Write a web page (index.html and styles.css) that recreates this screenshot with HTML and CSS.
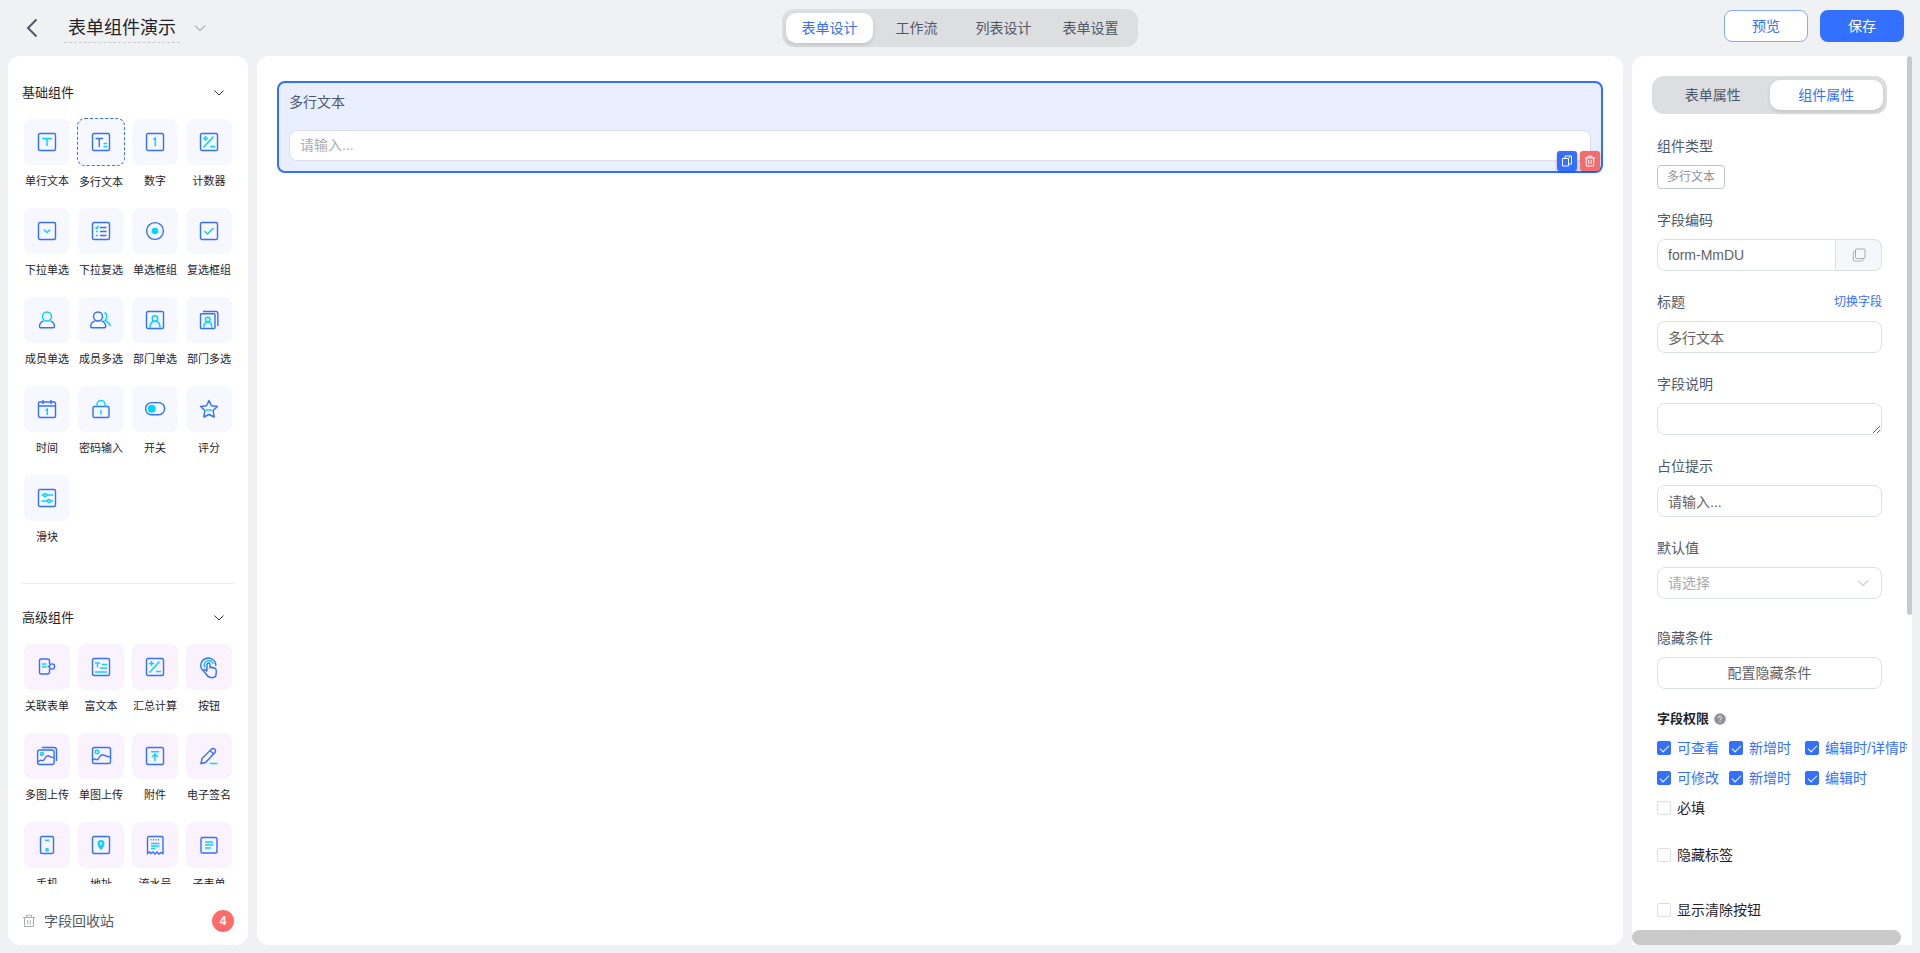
FILE: index.html
```html
<!DOCTYPE html>
<html lang="zh-CN">
<head>
    <meta charset="UTF-8">
    <meta name="viewport" content="width=device-width, initial-scale=1.0">
    <title>表单组件演示</title>
    <link rel="stylesheet" href="styles.css">
</head>
<body>
    <header class="header">
        <div class="header-left">
            <button class="icon-btn back" aria-label="返回">
                <svg width="12" height="20" viewBox="0 0 12 20"><path d="M10.500 1.500L2 10l8.500 8.500" /></svg>
            </button>
            <h1 class="form-name">表单组件演示</h1>
            <button class="icon-btn" aria-label="更多">
                <svg class="chevron" width="12" height="8" viewBox="0 0 12 8"><path d="M1 1.500l5 5 5-5" /></svg>
            </button>
        </div>
        <nav class="tabs">
            <button class="tab active">表单设计</button>
            <button class="tab">工作流</button>
            <button class="tab">列表设计</button>
            <button class="tab">表单设置</button>
        </nav>
        <div class="header-right">
            <button class="btn btn-plain">预览</button>
            <button class="btn btn-primary">保存</button>
        </div>
    </header>

    <main class="main">
        <aside class="panel sidebar">
            <div class="sidebar-list">
                <section class="group">
                    <h2 class="group-title">基础组件
                        <svg class="chevron dark" width="12" height="8" viewBox="0 0 12 8"><path d="M1.500 1.500L6 6l4.500-4.500" /></svg>
                    </h2>
                    <div class="widgets" id="basicList"></div>
                </section>
                <section class="group advanced">
                    <h2 class="group-title">高级组件
                        <svg class="chevron dark" width="12" height="8" viewBox="0 0 12 8"><path d="M1.500 1.500L6 6l4.500-4.500" /></svg>
                    </h2>
                    <div class="widgets" id="advancedList"></div>
                </section>
            </div>
            <div class="recycle">
                <svg width="14" height="14" viewBox="0 0 14 14"><path d="M1 3.500h12M4.500 3V1.300h5V3M2.500 3.500v9h9v-9M5.700 6v4.500M8.300 6v4.500" /></svg>
                <span>字段回收站</span>
                <span class="badge">4</span>
            </div>
        </aside>

        <section class="panel canvas">
            <div class="field selected">
                <label class="field-label" for="previewText">多行文本</label>
                <textarea class="field-text" id="previewText" rows="1" placeholder="请输入..."></textarea>
                <div class="field-tools">
                    <button class="tool" aria-label="复制">
                        <svg width="12" height="12" viewBox="0 0 12 12"><path d="M1.500 3.500h6v7.500h-6zM4 3.500V1h6.500v8H7.500M7.500 3.500l2-2" /></svg>
                    </button>
                    <button class="tool danger" aria-label="删除">
                        <svg width="12" height="12" viewBox="0 0 12 12"><path d="M1 3h10M4 3V1.200h4V3M2.300 3v8h7.400V3M4.800 5v4M7.200 5v4" /></svg>
                    </button>
                </div>
            </div>
        </section>

        <aside class="panel props">
            <div class="props-body">
                <div class="props-content">
                    <nav class="tabs props-tabs">
                        <button class="tab">表单属性</button>
                        <button class="tab active">组件属性</button>
                    </nav>
                    <div class="form">
                        <div class="form-item">
                            <div class="form-label">组件类型</div>
                            <span class="tag">多行文本</span>
                        </div>
                        <div class="form-item">
                            <label class="form-label" for="code">字段编码</label>
                            <div class="input-group">
                                <input class="input" id="code" type="text" value="form-MmDU">
                                <button class="append" aria-label="复制编码">
                                    <svg width="14" height="14" viewBox="0 0 14 14"><rect x="3.500" y="1" width="9.500" height="9.500" rx="1" /><path d="M3.500 3.500H2.300a1 1 0 0 0-1 1v7.500a1 1 0 0 0 1 1h7.500a1 1 0 0 0 1-1v-1.500" /></svg>
                                </button>
                            </div>
                        </div>
                        <div class="form-item">
                            <div class="form-label">
                                <label for="title">标题</label>
                                <a class="link" href="#">切换字段</a>
                            </div>
                            <input class="input" id="title" type="text" value="多行文本">
                        </div>
                        <div class="form-item">
                            <label class="form-label" for="desc">字段说明</label>
                            <textarea class="input" id="desc" rows="1"></textarea>
                        </div>
                        <div class="form-item">
                            <label class="form-label" for="placeholder">占位提示</label>
                            <input class="input" id="placeholder" type="text" value="请输入...">
                        </div>
                        <div class="form-item spaced">
                            <label class="form-label" for="defaultValue">默认值</label>
                            <div class="select-wrap">
                                <select class="input" id="defaultValue">
                                    <option>请选择</option>
                                </select>
                                <svg class="chevron" width="12" height="8" viewBox="0 0 12 8"><path d="M1 1.500l5 5 5-5" /></svg>
                            </div>
                        </div>
                        <div class="form-item">
                            <div class="form-label">隐藏条件</div>
                            <button class="input config-btn">配置隐藏条件</button>
                        </div>
                        <div class="perm-title">字段权限
                            <svg width="12" height="12" viewBox="0 0 12 12"><circle cx="6" cy="6" r="5.800" fill="#909399" /><path d="M4.400 4.800a1.600 1.600 0 1 1 2.400 1.400c-.600.300-.800.500-.800 1M6 8.300v1" fill="none" stroke="#fff" /></svg>
                        </div>
                        <div class="perms">
                            <label class="check"><input type="checkbox" checked>可查看</label>
                            <label class="check"><input type="checkbox" checked>新增时</label>
                            <label class="check"><input type="checkbox" checked>编辑时/详情时</label>
                            <label class="check"><input type="checkbox" checked>可修改</label>
                            <label class="check"><input type="checkbox" checked>新增时</label>
                            <label class="check"><input type="checkbox" checked>编辑时</label>
                        </div>
                        <div class="options">
                            <label class="check"><input type="checkbox">必填</label>
                            <label class="check"><input type="checkbox">隐藏标签</label>
                            <label class="check last"><input type="checkbox">显示清除按钮</label>
                        </div>
                    </div>
                </div>
                <div class="scroll-y"><div class="scroll-thumb"></div></div>
            </div>
            <div class="scroll-x"><div class="scroll-thumb"></div></div>
        </aside>
    </main>

    <script>
        // .c = cyan stroke, .cf = cyan fill
        const box = '<rect x="1.500" y="1.500" width="17" height="17" rx="1.500" />';

        const basic = [
            { name: '单行文本', icon: box + '<path class="c" d="M5 6.500h10M10 6.500v7.500" />' },
            { name: '多行文本', selected: true, icon: box + '<path d="M4.500 6.500h7.500M8.200 6.500v8.500" /><path class="c" d="M12.500 11.500h3.500M12.500 14.500h3.500" />' },
            { name: '数字', icon: box + '<path class="c" d="M8.300 7.500l2-1.300v8" />' },
            { name: '计数器', icon: box + '<path class="c" d="M4.500 15.500l10-11M4 6.500h5M6.500 4v5M11 14.500h5" />' },
            { name: '下拉单选', icon: box + '<path class="c" d="M7 8.500l3 3 3-3" />' },
            { name: '下拉复选', icon: box + '<path class="c" d="M4.500 6.200l1.200 1.300 2-2.500M5 10.500h2M5 14.500h2" /><path d="M9 6.500h6.500M9 10.500h6.500M9 14.500h6.500" />' },
            { name: '单选框组', icon: '<circle cx="10" cy="10" r="8.400" /><circle class="cf" cx="10" cy="10" r="3.300" />' },
            { name: '复选框组', icon: box + '<path class="c" d="M5.500 10l3 3 6-6" />' },
            { name: '成员单选', icon: '<path d="M6.500 10.800C4 12 2.500 14 2.500 16.200c0 1.200.800 1.600 2 1.600h11c1.200 0 2-.400 2-1.600 0-2.200-1.500-4.200-4-5.400" /><circle class="c" cx="10" cy="6.500" r="4.500" />' },
            { name: '成员多选', icon: '<circle cx="7" cy="6.500" r="4.500" /><path d="M3.800 10.800C1.300 12-.300 14-.300 16.200c0 1.200.800 1.600 2 1.600h11c1.200 0 2-.400 2-1.600 0-2.200-1.600-4.200-4-5.400" /><path class="c" d="M13.500 2.500c3 1.700 3 6 .500 8 3.500 1.200 4 3 5.500 5.500" />' },
            { name: '部门单选', icon: box + '<circle class="c" cx="10" cy="8.500" r="2.800" /><path class="c" d="M5 17.800c0-4 2-6.500 5-6.500s5 2.500 5 6.500" />' },
            { name: '部门多选', icon: '<rect x="1.500" y="3.800" width="14.500" height="14.700" rx="1" /><path d="M4 1.500h13a1.800 1.800 0 0 1 1.800 1.800V16" /><circle class="c" cx="8.800" cy="9.500" r="2.300" /><path class="c" d="M4.800 17.500c0-3.500 1.500-5.500 4-5.500s4 2 4 5.500" />' },
            { name: '时间', icon: '<rect x="1.500" y="3" width="17" height="15.500" rx="1.500" /><path d="M1.500 7h17M6 1v4M14 1v4" /><path class="c" d="M8.500 11.300l1.800-1.200v6" />' },
            { name: '密码输入', icon: '<rect x="2" y="7.500" width="16" height="11" rx="1.500" /><path class="c" d="M6 7.500V5.500a4 4 0 0 1 8 0v2M10 11v4.500" />' },
            { name: '开关', icon: '<rect x=".600" y="3.600" width="19" height="12.200" rx="6" /><circle class="cf" cx="6.700" cy="9.700" r="4" />' },
            { name: '评分', icon: '<path stroke-linejoin="round" d="M10 1.500l2.500 5.300 5.900.700-4.300 4 1.100 6.500-5.200-2.500L4.800 18l1.100-6.500-4.300-4 5.900-.700z" /><path class="c" d="M7 11h6" />' },
            { name: '滑块', icon: box + '<circle class="c" cx="8" cy="7" r="1.500" /><circle class="c" cx="12" cy="13" r="1.500" /><path class="c" d="M4.500 7h2M9.500 7h6.500M4.500 13h6M13.500 13H16" />' }
        ];

        const advanced = [
            { name: '关联表单', icon: '<path d="M12.500 7V4a2 2 0 0 0-2-2H4a1.500 1.500 0 0 0-1.500 1.500v12A1.500 1.500 0 0 0 4 17h6.500a2 2 0 0 0 2-2v-3M10.500 9.500h2" /><circle cx="15" cy="9.500" r="2.600" /><path class="c" d="M5 7h4.500M5 10h4.500" />' },
            { name: '富文本', icon: box + '<path class="c" d="M4 6h5M6.500 6v4.500M11 7.500h5M9 11h7M4 15h12" />' },
            { name: '汇总计算', icon: box + '<path class="c" d="M4.500 15.500l10-11M4 6.500h5M6.500 4v5M11 14.500h5" />' },
            { name: '按钮', icon: '<path d="M4 13.800A7.500 7.500 0 1 1 16.800 9" /><path class="c" d="M5.800 10.500a4.600 4.600 0 1 1 8.400-3.500" /><path d="M8 14V7.500a1.500 1.500 0 0 1 3 0V10l4.500 1c1.200.300 1.700 1 1.700 2.200v3c0 3-1.800 4.500-4.500 4.500-2.500 0-4-1-5.500-3.500l-2.600-3.200c-.500-1.200 1-2 1.900-1l1.500 1.500M11 10v1.500M14 10.800v1" />' },
            { name: '多图上传', icon: '<rect x=".600" y="4" width="16.500" height="14.500" rx="2" /><path d="M5 1.500h12a2.500 2.500 0 0 1 2.500 2.500v11M.800 16l2-1.500c1.200-.800 2 .300 3 .200 2.200-.200 2-5 5.200-4.900 2 .100 2.500 1.800 5.800 1.700" /><circle class="c" cx="5" cy="8" r="1.500" />' },
            { name: '单图上传', icon: '<rect x="1.500" y="1.500" width="18" height="16" rx="2" /><path d="M1.500 13.800c2-2 3 .200 4.500 0 2.500-.300 2-5 5.500-5 2.500 0 3.500 2.500 8 2" /><circle class="c" cx="6" cy="6" r="1.700" />' },
            { name: '附件', icon: box + '<path class="c" d="M6 5.800h8M10 15V8.500M7 11l3-3 3 3" />' },
            { name: '电子签名', icon: '<path d="M2 17.500l1-5L12.500 3c2.500-1.500 5 1 3.500 3.500L6.500 16.500zM11 4.500l3.500 3.500" /><path class="c" d="M11 17.500h7.500" />' },
            { name: '手机', icon: '<rect x="3.500" y="1.500" width="13" height="17" rx="1.500" /><path class="c" d="M8 5.300h4" /><circle class="c" cx="10" cy="14.800" r="1.200" />' },
            { name: '地址', icon: box + '<path class="cf" fill-rule="evenodd" d="M10 15.500C8 12.500 6.500 10.500 6.500 8.500a3.500 3.500 0 0 1 7 0c0 2-1.500 4-3.500 7zM10 7.200a1.300 1.300 0 1 0 0 2.600 1.300 1.300 0 0 0 0-2.600z" />' },
            { name: '流水号', icon: '<path d="M2.500 18.500V3A1.500 1.500 0 0 1 4 1.500h12.500A1.500 1.500 0 0 1 18 3v15.500l-2-1-2 1.500-2-2-2 2-2-2-2 1.500-1.500-1.500zM5.500 4.800h1M8 4.800h1M10.500 4.800h1M13 4.800h1" /><path class="c" d="M6 8.500h8.500M6 11h8.500M6 13.500h4" />' },
            { name: '子表单', icon: '<rect x="2" y="2.500" width="16" height="15.500" rx="1.500" /><path class="c" d="M6 7h8M6 10h8M6 13h6" />' }
        ];

        function renderWidgets(id, list) {
            document.getElementById(id).innerHTML = list.map(item => `
                <button class="widget${item.selected ? ' selected' : ''}">
                    <span class="tile"><svg width="20" height="20" viewBox="0 0 20 20">${item.icon}</svg></span>
                    <span class="widget-name">${item.name}</span>
                </button>
            `).join('');
        }

        renderWidgets('basicList', basic);
        renderWidgets('advancedList', advanced);
    </script>
</body>
</html>
```

FILE: styles.css
```css
* {
    box-sizing: border-box;
}
body {
    margin: 0;
    height: 100vh;
    display: flex;
    flex-direction: column;
    overflow: hidden;
    background-color: #f0f1f3;
    color: #1f2329;
    font-family: "Liberation Sans", "Noto Sans CJK SC", sans-serif;
    font-size: 14px;
    line-height: 22px;
}
button, input, select, textarea {
    font: inherit;
    color: inherit;
    margin: 0;
}
button {
    padding: 0;
    border: none;
    background: none;
    cursor: pointer;
}
svg {
    fill: none;
    overflow: visible;
    flex-shrink: 0;
}

/* header */
.header {
    height: 56px;
    flex-shrink: 0;
    display: grid;
    grid-template-columns: 1fr auto 1fr;
    align-items: center;
    padding: 0 16px;
}
.header-left {
    display: flex;
    align-items: center;
    padding-left: 10px;
}
.icon-btn {
    display: flex;
}
.back {
    margin-right: 26px;
}
.back path {
    stroke: #4e5969;
    stroke-width: 2;
}
.chevron path {
    stroke: #808590;
}
.chevron.dark path {
    stroke: #303133;
}
.form-name {
    margin: 0 14px 0 0;
    padding: 0 4px;
    border-bottom: 1px dashed #c9cdd4;
    font-size: 18px;
    font-weight: normal;
    line-height: 28px;
}
.header-right {
    display: flex;
    justify-content: flex-end;
    gap: 12px;
    padding-bottom: 4px;
}
.btn {
    height: 32px;
    padding: 0 28px;
    border-radius: 8px;
}
.btn-plain {
    padding: 0 27px;
    background-color: #fff;
    border: 1px solid #85a9ff;
    color: #3370ff;
}
.btn-primary {
    background-color: #3370ff;
    color: #fff;
}
.tabs {
    display: flex;
    padding: 4px;
    border-radius: 12px;
    background-color: #dddee0;
}
.tab {
    width: 87px;
    height: 30px;
    border-radius: 10px;
    color: #4e5969;
}
.tab.active {
    background-color: #fff;
    color: #3370ff;
    box-shadow: 0 2px 4px rgba(0, 0, 0, 0.12);
}

/* layout */
.main {
    flex: 1;
    min-height: 0;
    display: flex;
    gap: 9px;
    padding: 0 8px 8px;
}
.panel {
    background-color: #fff;
    border-radius: 12px;
}

/* component list */
.sidebar {
    width: 240px;
    flex-shrink: 0;
    display: flex;
    flex-direction: column;
    padding: 26px 14px 0;
}
.sidebar-list {
    flex: 1;
    min-height: 0;
    overflow: hidden;
}
.group-title {
    display: flex;
    justify-content: space-between;
    align-items: center;
    margin: 0 0 14px;
    padding-right: 9px;
    font-size: 13px;
    font-weight: normal;
    line-height: 22px;
}
.group.advanced {
    margin-top: 20px;
    padding-top: 23px;
    border-top: 1px solid #ebeef5;
}
.widgets {
    display: grid;
    grid-template-columns: repeat(4, 54px);
    margin-left: -2px;
}
.widget {
    height: 89px;
    padding-top: 1px;
    display: flex;
    flex-direction: column;
    align-items: center;
    justify-content: flex-start;
}
.tile {
    width: 46px;
    height: 46px;
    display: flex;
    align-items: center;
    justify-content: center;
    border-radius: 8px;
    background-color: #f6f7ff;
}
.advanced .tile {
    background-color: #fbf2ff;
}
.tile svg {
    stroke: #3370ff;
    stroke-width: 1.4;
}
.tile .c {
    stroke: #00d6ff;
    stroke-width: 1.5;
}
.tile .cf {
    fill: #00d6ff;
    stroke: none;
}
.widget-name {
    margin-top: 7px;
    font-size: 11px;
    line-height: 18px;
    white-space: nowrap;
}
.widget.selected {
    padding-top: 0;
}
.selected .tile {
    width: 48px;
    height: 48px;
    border: 1px dashed #3370ff;
}
.recycle {
    display: flex;
    align-items: flex-end;
    gap: 8px;
    height: 61px;
    padding-bottom: 13px;
    color: #4e5969;
}
.recycle svg {
    margin-bottom: 4px;
    stroke: #a8abb2;
}
.badge {
    width: 22px;
    height: 22px;
    margin-left: auto;
    border-radius: 50%;
    background-color: #ff6b6b;
    color: #fff;
    font-size: 12px;
    font-weight: bold;
    text-align: center;
}

/* canvas */
.canvas {
    flex: 1;
    min-width: 0;
    padding: 25px 20px;
}
.field {
    position: relative;
    padding: 8px 10px 10px;
    border: 2px solid #3370ff;
    border-radius: 8px;
    background-color: #e9efff;
    display: flex;
    flex-direction: column;
    gap: 17px;
}
.field-label {
    color: #4e5969;
}
.field-text {
    height: 31px;
    padding: 3px 10px;
    border: 1px solid #dcdfe6;
    border-radius: 8px;
    background-color: #fff;
    resize: none;
    overflow: hidden;
}
.field-text::placeholder {
    color: #a8abb2;
}
.field-tools {
    position: absolute;
    right: 1px;
    bottom: 0;
    display: flex;
    gap: 3px;
}
.tool {
    width: 20px;
    height: 20px;
    display: flex;
    align-items: center;
    justify-content: center;
    border-radius: 3px;
    background-color: #3370ff;
    box-shadow: 0 1px 3px rgba(0, 0, 0, 0.3);
}
.tool.danger {
    background-color: #f56c6c;
}
.tool path {
    stroke: #fff;
}

/* properties */
.props {
    width: 280px;
    flex-shrink: 0;
    display: flex;
    flex-direction: column;
    overflow: hidden;
    border-radius: 12px 0 0 0;
}
.props-body {
    flex: 1;
    min-height: 0;
    display: flex;
}
.props-content {
    flex: 1;
    min-width: 0;
    overflow: hidden;
    padding: 20px;
}
.props-tabs .tab {
    flex: 1;
}
.form {
    padding: 21px 5px 0;
}
.form-item {
    margin-bottom: 20px;
}
.form-item.spaced {
    margin-bottom: 28px;
}
.form-label {
    display: flex;
    justify-content: space-between;
    margin-bottom: 8px;
    color: #4e5969;
}
.link {
    color: #3370ff;
    font-size: 12px;
    text-decoration: none;
}
.tag {
    display: block;
    width: fit-content;
    height: 24px;
    padding: 0 9px;
    border: 1px solid #c0c4cc;
    border-radius: 4px;
    color: #909399;
    font-size: 12px;
}
.input {
    display: block;
    width: 100%;
    height: 32px;
    padding: 0 10px;
    border: 1px solid #dcdfe6;
    border-radius: 8px;
    background-color: #fff;
    color: #606266;
    outline: none;
}
.input-group {
    display: flex;
}
.input-group .input {
    flex: 1;
    min-width: 0;
    border-radius: 8px 0 0 8px;
}
.append {
    width: 46px;
    display: flex;
    align-items: center;
    justify-content: center;
    border: 1px solid #dcdfe6;
    border-left: none;
    border-radius: 0 8px 8px 0;
    background-color: #f5f7fa;
}
.append svg {
    stroke: #a8abb2;
}
.select-wrap {
    position: relative;
}
.select-wrap select {
    appearance: none;
    color: #a8abb2;
}
.select-wrap .chevron {
    position: absolute;
    right: 13px;
    top: 12px;
    pointer-events: none;
}
.select-wrap .chevron path {
    stroke: #a8abb2;
}
.perm-title {
    display: flex;
    align-items: center;
    gap: 5px;
    margin: -1px 0 3px;
    font-size: 13px;
    font-weight: bold;
}
.perms {
    display: grid;
    grid-template-columns: 72px 76px auto;
    color: #3370ff;
}
.check {
    display: flex;
    align-items: center;
    gap: 6px;
    height: 30px;
    white-space: nowrap;
}
.check input {
    appearance: none;
    flex-shrink: 0;
    display: grid;
    place-items: center;
    width: 14px;
    height: 14px;
    border: 1px solid #dcdfe6;
    border-radius: 2px;
    background-color: #fff;
}
.check input:checked {
    border-color: #3370ff;
    background-color: #3370ff;
}
.check input:checked::after {
    content: "";
    width: 8px;
    height: 4px;
    margin-bottom: 2px;
    border: solid #fff;
    border-width: 0 0 1px 1px;
    transform: rotate(-45deg);
}
.options .check {
    margin-bottom: 17px;
}
.options .last {
    margin-top: 25px;
}

/* scrollbars */
.scroll-y {
    width: 5px;
}
.scroll-y .scroll-thumb {
    height: 64%;
    border-radius: 3px;
    background-color: #c9c9c9;
}
.scroll-x {
    height: 15px;
    padding-right: 11px;
}
.scroll-x .scroll-thumb {
    height: 100%;
    border-radius: 8px;
    background-color: #c9c9c9;
}
```
